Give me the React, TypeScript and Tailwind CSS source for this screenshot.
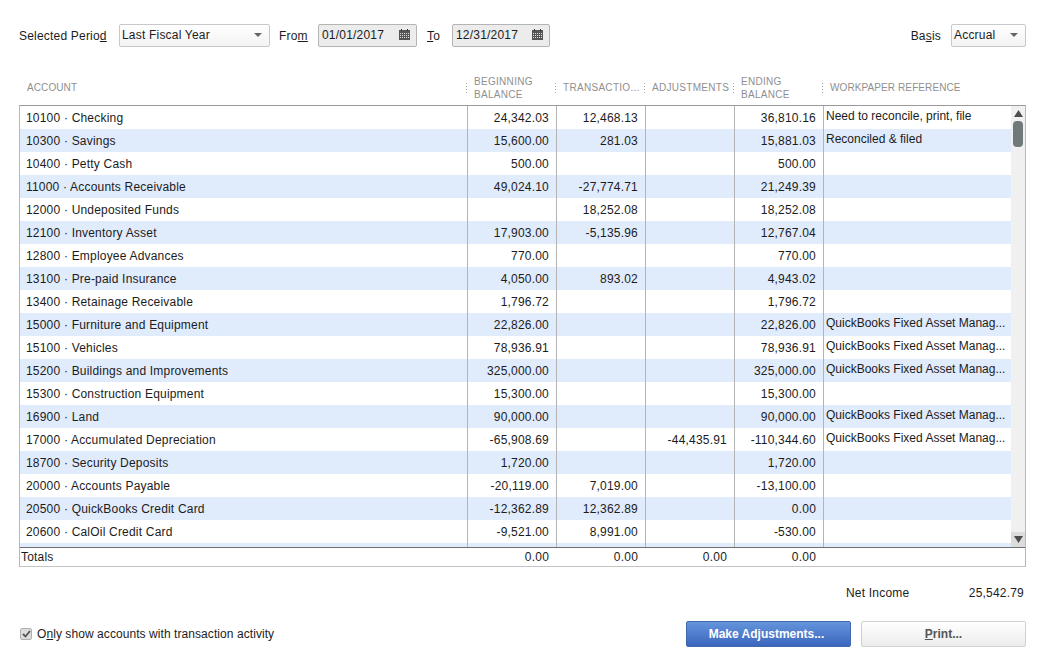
import React from "react";

const ROWS: [string, string, string, string, string, string][] = [
  ["10100 · Checking", "24,342.03", "12,468.13", "", "36,810.16", "Need to reconcile, print, file"],
  ["10300 · Savings", "15,600.00", "281.03", "", "15,881.03", "Reconciled & filed"],
  ["10400 · Petty Cash", "500.00", "", "", "500.00", ""],
  ["11000 · Accounts Receivable", "49,024.10", "-27,774.71", "", "21,249.39", ""],
  ["12000 · Undeposited Funds", "", "18,252.08", "", "18,252.08", ""],
  ["12100 · Inventory Asset", "17,903.00", "-5,135.96", "", "12,767.04", ""],
  ["12800 · Employee Advances", "770.00", "", "", "770.00", ""],
  ["13100 · Pre-paid Insurance", "4,050.00", "893.02", "", "4,943.02", ""],
  ["13400 · Retainage Receivable", "1,796.72", "", "", "1,796.72", ""],
  ["15000 · Furniture and Equipment", "22,826.00", "", "", "22,826.00", "QuickBooks Fixed Asset Manag..."],
  ["15100 · Vehicles", "78,936.91", "", "", "78,936.91", "QuickBooks Fixed Asset Manag..."],
  ["15200 · Buildings and Improvements", "325,000.00", "", "", "325,000.00", "QuickBooks Fixed Asset Manag..."],
  ["15300 · Construction Equipment", "15,300.00", "", "", "15,300.00", ""],
  ["16900 · Land", "90,000.00", "", "", "90,000.00", "QuickBooks Fixed Asset Manag..."],
  ["17000 · Accumulated Depreciation", "-65,908.69", "", "-44,435.91", "-110,344.60", "QuickBooks Fixed Asset Manag..."],
  ["18700 · Security Deposits", "1,720.00", "", "", "1,720.00", ""],
  ["20000 · Accounts Payable", "-20,119.00", "7,019.00", "", "-13,100.00", ""],
  ["20500 · QuickBooks Credit Card", "-12,362.89", "12,362.89", "", "0.00", ""],
  ["20600 · CalOil Credit Card", "-9,521.00", "8,991.00", "", "-530.00", ""],
];

function Caret() {
  return (
    <svg width="8" height="4" viewBox="0 0 8 4" className="shrink-0">
      <polygon points="0,0 8,0 4,4" fill="#666" />
    </svg>
  );
}

function Calendar() {
  return (
    <svg width="11" height="11" viewBox="0 0 11 11" className="shrink-0">
      <rect x="0" y="1" width="11" height="10" fill="#555" />
      <rect x="2" y="0" width="1" height="2" fill="#333" />
      <rect x="8" y="0" width="1" height="2" fill="#333" />
      {[4, 6, 8].map((y) =>
        [1, 3, 5, 7, 9].map((x) => (
          <rect key={`${x}-${y}`} x={x} y={y} width="1" height="1" fill="#ddd" />
        ))
      )}
    </svg>
  );
}

function Select({ value, className }: { value: string; className: string }) {
  return (
    <div className={`flex h-[23px] items-center justify-between rounded-[2px] border border-[#c8c8c8] bg-gradient-to-b from-white to-[#f3f3f3] pb-[2px] pl-[2px] pr-[7px] ${className}`}>
      <span>{value}</span>
      <Caret />
    </div>
  );
}

function DateField({ value, className }: { value: string; className: string }) {
  return (
    <div className={`flex h-[23px] items-center justify-between rounded-[2px] border border-[#b4b4b4] bg-[#ececec] pb-[2px] pl-[3px] pr-[6px] ${className}`}>
      <span>{value}</span>
      <Calendar />
    </div>
  );
}

function HeaderCell({ lines, className }: { lines: string[]; className: string }) {
  return (
    <div className={`flex items-center ${className}`}>
      <div className="mr-[7px] flex w-[1px] shrink-0 flex-col gap-[2px]">
        {[0, 1, 2, 3].map((i) => (
          <div key={i} className="h-[1px] w-[1px] bg-[#a0a0a0]" />
        ))}
      </div>
      <div className={`leading-[13px] ${lines.length > 1 ? "pt-[1px]" : ""}`}>
        {lines.map((l) => (
          <div key={l}>{l}</div>
        ))}
      </div>
    </div>
  );
}

export default function App() {
  return (
    <div className="flex h-[662px] w-[1041px] flex-col overflow-hidden bg-white font-['Liberation_Sans',Arial,sans-serif] text-[12px] tracking-[0.2px] text-[#1c1c1c]">
      <div className="mt-[24px] flex items-center pl-[19px] pr-[15px]">
        <span className="w-[100px]">
          Selected Perio<u>d</u>
        </span>
        <Select value="Last Fiscal Year" className="w-[151px]" />
        <span className="ml-[9px] w-[39px]">
          Fro<u>m</u>
        </span>
        <DateField value="01/01/2017" className="w-[99px]" />
        <span className="ml-[10px] w-[25px]">
          <u>T</u>o
        </span>
        <DateField value="12/31/2017" className="w-[98px]" />
        <span className="ml-auto mr-[10px]">
          Ba<u>s</u>is
        </span>
        <Select value="Accrual" className="w-[75px]" />
      </div>

      <div className="mt-[27px] grid h-[26px] grid-cols-[447px_89px_89px_89px_89px_1fr] pl-[19px] text-[10px] tracking-[0.3px] text-[#8f8f8f]">
        <div className="flex items-center pl-[8px] tracking-[0.1px]">ACCOUNT</div>
        <HeaderCell lines={["BEGINNING", "BALANCE"]} className="" />
        <HeaderCell lines={["TRANSACTIO..."]} className="" />
        <HeaderCell lines={["ADJUSTMENTS"]} className="" />
        <HeaderCell lines={["ENDING", "BALANCE"]} className="" />
        <HeaderCell lines={["WORKPAPER REFERENCE"]} className="tracking-[0.1px]" />
      </div>

      <div className="ml-[19px] mt-[5px] w-[1007px] border border-t-[#9a9a9a] border-x-[#b8b8b8] border-b-[#c4c4c4]">
        <div className="flex h-[442px] border-b border-[#707070]">
          <div className="min-w-0 flex-1 overflow-hidden">
            {ROWS.map((r, i) => (
              <div
                key={r[0]}
                className={`grid h-[23px] grid-cols-[448px_89px_89px_89px_89px_1fr] ${i % 2 === 1 ? "bg-[#e0ebfc]" : "bg-white"}`}
              >
                <div className="flex items-center border-r border-[#b4b4b4] pl-[6px]">{r[0]}</div>
                {[r[1], r[2], r[3], r[4]].map((v, j) => (
                  <div key={j} className="flex items-center justify-end border-r border-[#b4b4b4] pr-[7px]">
                    {v}
                  </div>
                ))}
                <div className="whitespace-nowrap pl-[2px] leading-[20px] tracking-[0px]">{r[5]}</div>
              </div>
            ))}
            <div className="grid h-[4px] grid-cols-[448px_89px_89px_89px_89px_1fr] bg-[#e0ebfc]">
              {[0, 1, 2, 3, 4].map((k) => (
                <div key={k} className="border-r border-[#b4b4b4]" />
              ))}
            </div>
          </div>
          <div className="flex w-[14px] shrink-0 flex-col bg-[#f0f0f0]">
            <div className="flex h-[15px] items-center justify-center">
              <svg width="9" height="7" viewBox="0 0 9 7">
                <polygon points="4.5,0 9,7 0,7" fill="#4d4d4d" />
              </svg>
            </div>
            <div className="mx-auto h-[26px] w-[10px] rounded-[4px] bg-[#707a7a]" />
            <div className="flex-1" />
            <div className="flex h-[15px] items-center justify-center bg-[#dcdcdc]">
              <svg width="9" height="7" viewBox="0 0 9 7">
                <polygon points="0,0 9,0 4.5,7" fill="#4d4d4d" />
              </svg>
            </div>
          </div>
        </div>
        <div className="grid h-[18px] grid-cols-[448px_89px_89px_89px_89px_1fr] items-center">
          <div className="pl-[1px]">Totals</div>
          {["0.00", "0.00", "0.00", "0.00"].map((v, i) => (
            <div key={i} className="pr-[8px] text-right">
              {v}
            </div>
          ))}
        </div>
      </div>

      <div className="mt-[17px] flex pr-[17px]">
        <span className="ml-[846px]">Net Income</span>
        <span className="ml-auto">25,542.79</span>
      </div>

      <div className="mt-[19px] flex items-center pl-[20px] pr-[15px]">
        <div className="flex h-[12px] w-[12px] items-center justify-center rounded-[2px] border border-[#b0b0b0] bg-[#dcdcdc]">
          <svg width="9" height="8" viewBox="0 0 9 8">
            <path d="M1 4 L3.5 6.5 L8 1" stroke="#555" strokeWidth="1.8" fill="none" />
          </svg>
        </div>
        <span className="ml-[5px] pb-[1px] tracking-[0.07px]">
          O<u>n</u>ly show accounts with transaction activity
        </span>
        <button className="ml-auto h-[26px] w-[165px] rounded-[2px] border border-[#3f68ad] bg-gradient-to-b from-[#6494dc] to-[#3d66bd] pr-[4px] font-bold tracking-[0px] text-white">
          Make Adjustments...
        </button>
        <button className="ml-[10px] h-[26px] w-[165px] rounded-[2px] border border-[#d0d0d0] bg-gradient-to-b from-white to-[#ececec] font-bold tracking-[0px] text-[#555]">
          <u>P</u>rint...
        </button>
      </div>
    </div>
  );
}
